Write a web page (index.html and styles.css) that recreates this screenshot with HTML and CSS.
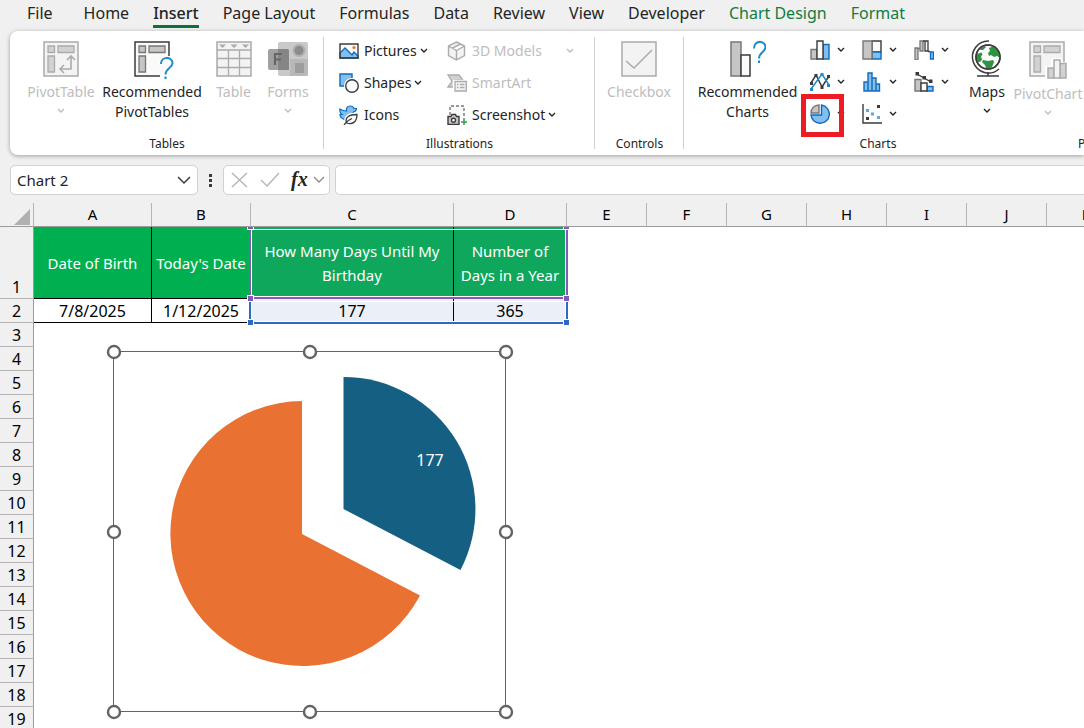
FILE: index.html
```html
<!DOCTYPE html>
<html lang="en">

<head>
  <meta charset="UTF-8">
  <meta name="viewport" content="width=device-width, initial-scale=1.0">
  <title>Birthday Countdown</title>
  <link rel="stylesheet" href="styles.css">
</head>

<body>
  <!-- Shared chevron -->
  <svg class="sprite" aria-hidden="true">
    <symbol id="chevron" viewBox="0 0 8 6"><path d="M1 1l3 3 3-3" fill="none" stroke="currentColor" stroke-width="1.4"/></symbol>
  </svg>

  <nav class="tabs">
    <button class="tab tab-file">File</button>
    <button class="tab">Home</button>
    <button class="tab active">Insert</button>
    <button class="tab">Page Layout</button>
    <button class="tab">Formulas</button>
    <button class="tab">Data</button>
    <button class="tab">Review</button>
    <button class="tab">View</button>
    <button class="tab">Developer</button>
    <button class="tab context">Chart Design</button>
    <button class="tab context">Format</button>
  </nav>

  <div class="ribbon">
    <!-- Tables -->
    <section class="group group-tables">
      <div class="group-body">
        <button class="big-btn w-pivot" disabled>
          <svg width="36" height="36" viewBox="0 0 36 36" fill="#f3f3f3" stroke="#ababab">
            <path d="M1 1h34v34H1z" stroke-width="1.5"/>
            <g fill="#d2d2d2" stroke-width="1.3"><path d="M5 5h6.500v6.500H5zM15 5h16v6.500H15zM5 15h6.500v16H5z"/></g>
            <path d="M17 28h11V16M21 24l-4 4 4 4M24 19l4-4 4 4" fill="none" stroke-width="1.6"/>
          </svg>
          <span>PivotTable</span>
          <svg class="chev" width="8" height="6"><use href="#chevron"/></svg>
        </button>
        <button class="big-btn w-rec">
          <svg class="spill" width="36" height="36" viewBox="0 0 36 36" fill="#fafafa" stroke="#3b3b3b">
            <path d="M26 35H1V1h34v14" stroke-width="1.5"/>
            <g fill="#c8c6c4" stroke="#797774" stroke-width="1.3"><path d="M5 5h6.500v6.500H5zM15 5h16v6.500H15zM5 15h6.500v16H5z"/></g>
            <path d="M26.500 24c0-9 11.500-8.500 11.500-2 0 5-7 5.500-7 11" fill="none" stroke="#fff" stroke-width="5"/>
            <path d="M27 23c0-8 11.500-7.500 11.500-1 0 5-7 5-7 11.500M31.500 35.500V38" fill="none" stroke="#1e8bcd" stroke-width="2"/>
          </svg>
          <span>Recommended<br>PivotTables</span>
        </button>
        <button class="big-btn w-table" disabled>
          <svg width="36" height="36" viewBox="0 0 36 36" fill="#f3f3f3" stroke="#ababab">
            <path d="M1 1h34v34H1z" stroke-width="1.500"/>
            <path d="M1 9h34M1 17.500h34M1 26.500h34M12.500 9v26M23.500 9v26" stroke-width="1.3"/>
            <path d="M3 3.500h7L6.500 7zM14.500 3.500h7L18 7zM26 3.500h7L29.500 7z" fill="#ababab" stroke="none"/>
          </svg>
          <span>Table</span>
        </button>
        <button class="big-btn w-forms" disabled>
          <svg width="40" height="36" viewBox="0 0 40 36">
            <rect x="10" y="1" width="30" height="34" rx="2" fill="#c9c9c9"/>
            <path d="M22 18h18v15a2 2 0 0 1-2 2H22z" fill="#b8b8b8"/>
            <path d="M27 22h9v10h-9z" fill="#9d9d9d"/>
            <circle cx="31" cy="9.500" r="6.500" fill="#b0b0b0"/><circle cx="31" cy="9.500" r="4.500" fill="#8b8b8b"/>
            <rect y="8" width="21" height="21" rx="2" fill="#a1a1a1"/>
            <path d="M10 8h9a2 2 0 0 1 2 2v19H10z" fill="#858585"/>
            <path d="M7 24V13h7M7 18.500h6" fill="none" stroke="#666" stroke-width="2.200"/>
          </svg>
          <span>Forms</span>
          <svg class="chev" width="8" height="6"><use href="#chevron"/></svg>
        </button>
      </div>
      <h2 class="group-label">Tables</h2>
    </section>

    <!-- Illustrations -->
    <section class="group group-illus">
      <div class="group-body small-cols">
        <div class="small-col col-left">
          <button class="small-btn">
            <svg width="20" height="20" viewBox="0 0 20 20">
              <path d="M1 3h18v14H1z" fill="#fafafa"/>
              <path d="M1 12l5-5 7 7 2-3 4 4v2H1z" fill="#83beec" stroke="#0f6cbd" stroke-width="1.4"/>
              <path d="M1 3h18v14H1z" fill="none" stroke="#3b3b3b" stroke-width="1.4"/>
              <circle cx="15" cy="6.500" r="1.600" fill="#ed7331"/>
            </svg>
            <span>Pictures</span><svg class="chev" width="8" height="6"><use href="#chevron"/></svg>
          </button>
          <button class="small-btn">
            <svg width="20" height="20" viewBox="0 0 20 20">
              <path d="M1 1h12v12H1z" fill="#83beec" stroke="#0f6cbd" stroke-width="1.400"/>
              <circle cx="13" cy="13" r="8" fill="#fff"/>
              <circle cx="13" cy="13" r="6.300" fill="#fafafa" stroke="#3b3b3b" stroke-width="1.400"/>
            </svg>
            <span>Shapes</span><svg class="chev" width="8" height="6"><use href="#chevron"/></svg>
          </button>
          <button class="small-btn">
            <svg width="20" height="20" viewBox="0 0 20 20">
              <path d="M1 4c2 1.500 4 2 6.500 2C7 3 8.500 1 11 1c2 0 3.500 1 4 2.500h2.500c0 2-1.500 3-3 3.500L12 11l-5 4C3 14 1 12 1 9.500h2C1 8 .5 6 1 4z" fill="#83beec" stroke="#0f6cbd" stroke-width="1.200"/>
              <path d="M7.500 18c-2-6 3-8.500 10.500-8.500 0 7-4 10.500-10.500 8.500z" fill="#fff" stroke="#fff" stroke-width="4"/>
              <path d="M7.500 18c-2-6 3-8.500 10.500-8.500 0 7-4 10.500-10.500 8.500zM5 20c2-3 4-5 8-6.500" fill="#fafafa" stroke="#3b3b3b" stroke-width="1.300"/>
            </svg>
            <span>Icons</span>
          </button>
        </div>
        <div class="small-col">
          <button class="small-btn" disabled>
            <svg width="20" height="20" viewBox="0 0 20 20" fill="#f3f3f3" stroke="#ababab" stroke-width="1.400">
              <path d="M9.500 1l8 4v9.500l-8 4.500-8-4.500V5zM1.500 5l8 4.500 8-4.500M9.500 9.500V19M5.500 7l8-4"/>
            </svg>
            <span class="wide-text">3D Models</span><svg class="chev" width="8" height="6"><use href="#chevron"/></svg>
          </button>
          <button class="small-btn" disabled>
            <svg width="20" height="20" viewBox="0 0 20 20" fill="#d2d2d2" stroke="#ababab" stroke-width="1.300">
              <path d="M1 2h11l4 5H8v7H1l4-5.500z"/>
              <path d="M6.500 7.500H21V20H6.500z" fill="#fff" stroke="#fff"/>
              <path d="M8 8.500h11.300v9.500H8z" fill="#f3f3f3"/>
              <path d="M10 11.500h1.500M13 11.500h4.500M10 14.500h1.500M13 14.500h4.500"/>
            </svg>
            <span>SmartArt</span>
          </button>
          <button class="small-btn">
            <svg width="20" height="20" viewBox="0 0 20 20">
              <path d="M3 10V1h14v13" fill="#fafafa" stroke="#797774" stroke-width="1.400" stroke-dasharray="3 2"/>
              <path d="M1 11.500h3l1-2h3.500l1 2H12v8H1z" fill="#c8c6c4" stroke="#3b3b3b" stroke-width="1.400"/>
              <circle cx="6.500" cy="15.300" r="2" fill="#fff" stroke="#3b3b3b" stroke-width="1.400"/>
              <path d="M17 14v6M14 17h6" stroke="#fff" stroke-width="4"/>
              <path d="M17 14v6M14 17h6" stroke="#2f9e4d" stroke-width="1.500"/>
            </svg>
            <span>Screenshot</span><svg class="chev" width="8" height="6"><use href="#chevron"/></svg>
          </button>
        </div>
      </div>
      <h2 class="group-label">Illustrations</h2>
    </section>

    <!-- Controls -->
    <section class="group group-controls">
      <div class="group-body">
        <button class="big-btn w-check" disabled>
          <svg width="36" height="36" viewBox="0 0 36 36" fill="#f3f3f3" stroke="#ababab" stroke-width="1.500">
            <path d="M1 1h34v34H1z"/><path d="M5 20l8 7L31 9" fill="none"/>
          </svg>
          <span>Checkbox</span>
        </button>
      </div>
      <h2 class="group-label">Controls</h2>
    </section>

    <!-- Charts -->
    <section class="group group-charts">
      <div class="group-body">
        <button class="big-btn w-reccharts">
          <svg width="36" height="36" viewBox="0 0 36 36">
            <path d="M1 1h10v34H1z" fill="#c8c6c4" stroke="#797774" stroke-width="1.500"/>
            <path d="M11 14h9v21h-9z" fill="#fafafa" stroke="#3b3b3b" stroke-width="1.500"/>
            <path d="M24 7.500c0-9 11.500-8 11.500-1.500 0 5-6.500 5-6.500 11.500M29 19.500V22" fill="none" stroke="#1e8bcd" stroke-width="2"/>
          </svg>
          <span>Recommended<br>Charts</span>
        </button>
        <div class="chart-grid">
          <button class="chart-btn" aria-label="Column chart">
            <svg width="20" height="20" viewBox="0 0 20 20" stroke-width="1.400">
              <path d="M1 9.500h6V19H1z" fill="#c8c6c4" stroke="#797774"/><path d="M13 4.500h6V19h-6z" fill="#83beec" stroke="#0f6cbd"/><path d="M7 1h6v18H7z" fill="#fafafa" stroke="#3b3b3b"/>
            </svg>
            <svg class="chev" width="8" height="6"><use href="#chevron"/></svg>
          </button>
          <button class="chart-btn" aria-label="Hierarchy chart">
            <svg width="20" height="20" viewBox="0 0 20 20" stroke-width="1.400">
              <path d="M10 1h9v11h-9z" fill="#fafafa" stroke="#3b3b3b"/><path d="M10 12h9v7h-9z" fill="#83beec" stroke="#0f6cbd"/><path d="M1 1h9v18H1z" fill="#c8c6c4" stroke="#797774"/>
            </svg>
            <svg class="chev" width="8" height="6"><use href="#chevron"/></svg>
          </button>
          <button class="chart-btn" aria-label="Waterfall chart">
            <svg width="20" height="20" viewBox="0 0 20 20" stroke-width="1.300">
              <path d="M1 8h3v12H1zM6 1h3v10H6zM4 8.500h2" fill="#c8c6c4" stroke="#797774"/><path d="M9 1h5v10h-3V1" fill="#fafafa" stroke="#3b3b3b"/><path d="M14 11.500h2" stroke="#3b3b3b"/><path d="M16.500 12h3v7h-3z" fill="#83beec" stroke="#0f6cbd"/>
            </svg>
            <svg class="chev" width="8" height="6"><use href="#chevron"/></svg>
          </button>
          <button class="chart-btn" aria-label="Line chart">
            <svg width="20" height="20" viewBox="0 0 20 20" fill="none" stroke-width="1.500">
              <path d="M1 11l5-8 6 12 7-11" stroke="#3b3b3b"/><path d="M1 17L12 2l7 11" stroke="#1e8bcd"/>
              <path d="M0 10h3v3H0zM4.500 2h3v3h-3zM10.500 14h3v3h-3zM17 3h3v3h-3z" fill="#3b3b3b"/>
              <path d="M0 16h3v3H0zM10.500 1h3v3h-3zM17 12h3v3h-3z" fill="#1e8bcd"/>
            </svg>
            <svg class="chev" width="8" height="6"><use href="#chevron"/></svg>
          </button>
          <button class="chart-btn" aria-label="Statistic chart">
            <svg width="20" height="20" viewBox="0 0 20 20" fill="#83beec" stroke="#0f6cbd" stroke-width="1.400">
              <path d="M2 10h4v9H2zM6 1h4v18H6zM10 6h4v13h-4zM14 12h3.500v7H14z"/>
            </svg>
            <svg class="chev" width="8" height="6"><use href="#chevron"/></svg>
          </button>
          <button class="chart-btn" aria-label="Combo chart">
            <svg width="20" height="20" viewBox="0 0 20 20" stroke-width="1.400">
              <path d="M1 7.500h6V19H1z" fill="#c8c6c4" stroke="#797774"/><path d="M13 14.500h6V19h-6z" fill="#83beec" stroke="#0f6cbd"/><path d="M7 11h6v8H7z" fill="#fafafa" stroke="#3b3b3b"/>
              <path d="M3 2l7 4 7 4" fill="none" stroke="#3b3b3b"/><path d="M1.500 0h3.500v3.500H1.500zM8.500 4H12v3.500H8.500zM15 7.500h3.500V11H15z" fill="#3b3b3b"/>
            </svg>
            <svg class="chev" width="8" height="6"><use href="#chevron"/></svg>
          </button>
          <button class="chart-btn highlighted" aria-label="Pie chart">
            <svg width="20" height="20" viewBox="0 0 20 20" stroke-width="1.400">
              <path d="M9 9H1c0-4.500 3.500-8 8-8z" fill="#c8c6c4" stroke="#797774"/>
              <path d="M11.500 1A9.200 9.200 0 1 1 1 11h10.500z" fill="#83beec" stroke="#0f6cbd"/>
            </svg>
            <svg class="chev" width="8" height="6"><use href="#chevron"/></svg>
          </button>
          <button class="chart-btn" aria-label="Scatter chart">
            <svg width="20" height="20" viewBox="0 0 20 20">
              <path d="M1 0v19h19" fill="none" stroke="#3b3b3b" stroke-width="1.400"/>
              <path d="M15 1h3v3h-3zM4 13h3v3H4z" fill="#3b3b3b"/><path d="M4 5h3v3H4zM9 8.500h3v3H9zM15 12h3v3h-3z" fill="#5aa8e2"/>
            </svg>
            <svg class="chev" width="8" height="6"><use href="#chevron"/></svg>
          </button>
        </div>
        <button class="big-btn w-maps">
          <svg class="spill" width="32" height="36" viewBox="0 0 32 36" fill="none" stroke="#3b3b3b" stroke-width="1.500">
            <circle cx="17" cy="16" r="12" fill="#fafafa"/>
            <g fill="#2f9441" stroke="none">
              <path d="M18 7l5-2 3 3 3 5v4l-3-2-3 1-3-2-2 1-1-3 2-2z"/>
              <path d="M5.500 13l5-1.500 1 2-1.500 2 1 3-2 2.500H7c-1-2-2-5-1.500-8z"/>
              <path d="M10 7l4-2 1 1-3 3-3 0z"/>
              <path d="M12 19l5 1 5-1 1 2-2 5-3 2-3-1-1-3-3-3z"/>
            </g>
            <circle cx="17" cy="16" r="12"/>
            <path d="M18 0a16 16 0 1 0 10 28M17 31v4M6 35h22"/>
          </svg>
          <span>Maps</span>
          <svg class="chev" width="8" height="6"><use href="#chevron"/></svg>
        </button>
      </div>
      <h2 class="group-label">Charts</h2>
    </section>

    <section class="group group-last">
      <div class="group-body">
        <button class="big-btn w-pivotchart" disabled>
          <svg width="38" height="38" viewBox="0 0 38 38" fill="#f3f3f3" stroke="#ababab">
            <path d="M1 1h34v34H1z" stroke-width="1.500"/>
            <g fill="#d2d2d2" stroke-width="1.300"><path d="M5 5h6.500v6.500H5zM15 5h16v6.500H15zM5 15h6.500v16H5z"/></g>
            <path d="M17 26h6v-8h9v4h6v16H17z" fill="#fff" stroke="#fff" stroke-width="2"/>
            <path d="M19 27h6v10h-6zM31 22.500h6V37h-6z" fill="#d2d2d2" stroke-width="1.500"/><path d="M25 19h6v18h-6z" stroke-width="1.500"/>
          </svg>
          <span>PivotChart</span>
          <svg class="chev" width="8" height="6"><use href="#chevron"/></svg>
        </button>
      </div>
      <h2 class="group-label">PivotChart</h2>
    </section>
  </div>

  <!-- Name box and formula bar -->
  <div class="formula-row">
    <div class="name-box">
      <input type="text" value="Chart 2" aria-label="Name box">
      <button aria-label="Open name list"><svg width="14" height="9" viewBox="0 0 14 9"><path d="M1 1l6 6 6-6" fill="none" stroke="#3b3b3b" stroke-width="1.500"/></svg></button>
    </div>
    <svg class="dots" width="4" height="16" viewBox="0 0 4 16" fill="#3b3b3b"><path d="M0 2h3v3H0zM0 7h3v3H0zM0 12h3v3H0z"/></svg>
    <div class="fx-box">
      <button aria-label="Cancel"><svg width="18" height="16" viewBox="0 0 18 16"><path d="M1 1l15 14M16 1L1 15" stroke="#b5b5b5" stroke-width="1.400"/></svg></button>
      <button aria-label="Enter"><svg width="20" height="16" viewBox="0 0 20 16"><path d="M1 8l6 6L19 1" fill="none" stroke="#b5b5b5" stroke-width="1.400"/></svg></button>
      <button class="fx" aria-label="Insert function">fx</button>
      <button aria-label="Recent functions"><svg width="12" height="8" viewBox="0 0 12 8"><path d="M1 1l5 5 5-5" fill="none" stroke="#8a8a8a" stroke-width="1.300"/></svg></button>
    </div>
    <input class="formula-input" type="text" aria-label="Formula bar">
  </div>

  <main class="sheet">
    <table class="grid">
      <colgroup>
        <col class="c-head"><col class="c-a"><col class="c-b"><col class="c-c"><col class="c-d">
        <col class="c-std"><col class="c-std"><col class="c-std"><col class="c-std"><col class="c-std"><col class="c-std"><col class="c-std">
      </colgroup>
      <thead>
        <tr>
          <th class="corner"><svg width="16" height="16" viewBox="0 0 16 16"><path d="M16 0v16H0z" fill="#b1b1b1"/></svg></th>
          <th>A</th><th>B</th><th>C</th><th>D</th><th>E</th><th>F</th><th>G</th><th>H</th><th>I</th><th>J</th><th>K</th>
        </tr>
      </thead>
      <tbody>
        <tr class="title-row">
          <th>1</th>
          <td class="title">Date of Birth</td>
          <td class="title">Today's Date</td>
          <td class="title picked">How Many Days Until My Birthday</td>
          <td class="title picked">Number of Days in a Year</td>
        </tr>
        <tr>
          <th>2</th>
          <td class="value">7/8/2025</td>
          <td class="value">1/12/2025</td>
          <td class="value picked">177</td>
          <td class="value picked">365</td>
        </tr>
        <tr><th>3</th></tr>
        <tr><th>4</th></tr>
        <tr><th>5</th></tr>
        <tr><th>6</th></tr>
        <tr><th>7</th></tr>
        <tr><th>8</th></tr>
        <tr><th>9</th></tr>
        <tr><th>10</th></tr>
        <tr><th>11</th></tr>
        <tr><th>12</th></tr>
        <tr><th>13</th></tr>
        <tr><th>14</th></tr>
        <tr><th>15</th></tr>
        <tr><th>16</th></tr>
        <tr><th>17</th></tr>
        <tr><th>18</th></tr>
        <tr><th>19</th></tr>
      </tbody>
    </table>

    <!-- Source ranges of the chart -->
    <div class="range range-names"><i class="knob tl"></i><i class="knob tr"></i></div>
    <div class="range range-values"><i class="knob bl"></i><i class="knob br"></i></div>
    <div class="range range-joint"><i class="knob tl"></i><i class="knob tr"></i></div>

    <!-- Pie chart -->
    <svg class="pie" width="408" height="376" viewBox="106 344 408 376">
      <path d="M113.500 351.500h392v360h-392z" fill="#fff" stroke="#636363"/>
      <path d="M302 534L420 595.500A132.500 132.500 0 1 1 302 401z" fill="#e97132"/>
      <path d="M343.500 509V377A132 132 0 0 1 460.500 570z" fill="#156082"/>
      <text x="430" y="466" text-anchor="middle">177</text>
      <g fill="#fff" stroke="#636363" stroke-width="2.400">
        <circle cx="114" cy="352" r="6"/><circle cx="310" cy="352" r="6"/><circle cx="506" cy="352" r="6"/>
        <circle cx="114" cy="532" r="6"/><circle cx="506" cy="532" r="6"/>
        <circle cx="114" cy="712" r="6"/><circle cx="310" cy="712" r="6"/><circle cx="506" cy="712" r="6"/>
      </g>
    </svg>
  </main>
</body>

</html>
```
FILE: styles.css
```css
*,
*::after {
  box-sizing: border-box;
}

body {
  margin: 0;
  height: 100vh;
  display: flex;
  flex-direction: column;
  overflow: hidden;
  background-color: #f0f0f0;
  color: #242424;
  font-family: "Noto Sans", "Open Sans", sans-serif;
  font-size: 14px;
}

button,
input {
  font: inherit;
  color: inherit;
  background: none;
  border: none;
  padding: 0;
  margin: 0;
}

button:disabled {
  color: #bdbdbd;
}

svg {
  display: block;
  flex-shrink: 0;
}

.spill {
  overflow: visible;
}

.sprite {
  position: absolute;
  width: 0;
  height: 0;
}

/* Tabs */
.tabs {
  display: flex;
  gap: 24px;
  height: 31px;
  padding-left: 27px;
  flex-shrink: 0;
}

.tab {
  font-size: 16px;
  line-height: 24px;
  height: 28px;
  padding-top: 1px;
  border-bottom: 3px solid transparent;
  white-space: nowrap;
}

.tab-file {
  margin-right: 7px;
}

.tab.active {
  font-weight: 500;
  border-bottom-color: #0f703b;
}

.tab.context {
  color: #107c41;
}

/* Ribbon */
.ribbon {
  display: flex;
  height: 124px;
  margin-left: 10px;
  flex-shrink: 0;
  background-color: #fff;
  border-radius: 8px 0 0 8px;
  box-shadow: 0 1px 4px rgba(0, 0, 0, 0.35);
}

.group {
  flex-shrink: 0;
  display: flex;
  flex-direction: column;
  justify-content: space-between;
  height: 115px;
  margin-top: 6px;
}

.group-tables,
.group-illus,
.group-controls {
  background: linear-gradient(#d1d1d1, #d1d1d1) right top / 1px 112px no-repeat;
}

.group-tables { width: 314px; }
.group-illus { width: 271px; }
.group-controls { width: 89px; }
.group-charts { width: 328px; }
.group-last { width: 72px; }

.group-body {
  display: flex;
}

.group-tables .group-body { padding-left: 14px; }
.group-charts .group-body { padding-left: 9px; }

.group-label {
  margin: 0;
  font-size: 12px;
  font-weight: normal;
  line-height: 16px;
  text-align: center;
}

.group-charts .group-label { padding-left: 60px; }
.group-last .group-label { padding-left: 66px; text-align: left; }

.big-btn {
  display: flex;
  flex-direction: column;
  align-items: center;
  padding-top: 4px;
  line-height: 20px;
  white-space: nowrap;
}

.big-btn > svg:first-child {
  margin-bottom: 5px;
}

.big-btn svg.chev {
  margin-top: 6px;
}

.big-btn span {
  height: 20px;
}

.w-pivot { width: 74px; }
.w-rec { width: 108px; }
.w-table { width: 55px; }
.w-forms { width: 54px; }
.w-check { width: 88px; }
.w-reccharts { width: 109px; }
.w-maps { width: 42px; }
.w-pivotchart { width: 72px; }

.small-cols {
  padding-left: 15px;
}

.col-left {
  width: 108px;
}

.small-btn {
  display: flex;
  align-items: center;
  gap: 5px;
  height: 32px;
  line-height: 20px;
  padding-bottom: 5px;
}

.small-btn .chev {
  margin-left: -2px;
}

.wide-text {
  width: 91px;
  text-align: left;
}

.chart-grid {
  display: grid;
  grid-template-columns: repeat(3, 52px);
  grid-auto-rows: 32px;
  padding-left: 8px;
}

.chart-btn {
  position: relative;
  display: flex;
  align-items: center;
  gap: 7px;
  padding-bottom: 6px;
}

.highlighted::after {
  content: "";
  position: absolute;
  left: -9px;
  top: -7px;
  width: 43px;
  height: 43px;
  border: 5px solid #ed1c24;
}

/* Formula bar */
.formula-row {
  display: flex;
  align-items: center;
  height: 48px;
  padding: 2px 0 0 10px;
  flex-shrink: 0;
}

.name-box,
.fx-box,
.formula-input {
  height: 30px;
  background-color: #fff;
  border: 1px solid #d1d1d1;
  border-radius: 5px;
}

.name-box {
  display: flex;
  align-items: center;
  width: 188px;
  padding: 0 6px;
}

.name-box input {
  flex: 1;
  min-width: 0;
  font-size: 15px;
}

.dots {
  margin: 0 10px 0 11px;
}

.fx-box {
  display: flex;
  align-items: center;
  gap: 11px;
  width: 107px;
  padding: 0 2px 0 7px;
}

.fx-box .fx {
  font: italic bold 20px/20px "Liberation Serif", serif;
  padding-bottom: 2px;
}

.fx-box button:last-child {
  margin-left: -6px;
}

.formula-input {
  flex: 1;
  margin-left: 5px;
  border-right: none;
  border-radius: 5px 0 0 5px;
}

/* Sheet */
.sheet {
  position: relative;
  flex: 1;
  background-color: #fff;
  overflow: hidden;
}

.grid {
  table-layout: fixed;
  width: 1127px;
  border-collapse: separate;
  border-spacing: 0;
  color: #000;
}

.c-head { width: 34px; }
.c-a { width: 118px; }
.c-b { width: 99px; }
.c-c { width: 203px; }
.c-d { width: 113px; }
.c-std { width: 80px; }

.grid th,
.grid td {
  height: 24px;
  padding: 0;
  font-weight: normal;
  font-size: 15px;
  line-height: 22px;
}

.grid th {
  background-color: #f0f0f0;
  line-height: 20px;
  padding-bottom: 2px;
}

.grid thead th {
  border-bottom: 1px solid #9b9b9b;
  border-right: 1px solid #b5b5b5;
}

.grid .corner {
  padding-bottom: 0;
}

.corner svg {
  margin: 4px 0 0 14px;
}

.grid tbody th {
  font-size: 16px;
  border-right: 1px solid #9b9b9b;
  border-bottom: 1px solid #b5b5b5;
  padding-bottom: 1px;
  vertical-align: bottom;
}

.grid .title-row th,
.grid .title {
  height: 72px;
}

.grid .title {
  background-color: #00b050;
  color: #fff;
  line-height: 24px;
  text-align: center;
  border-right: 1px solid #000;
  border-bottom: 1px solid #000;
}

.grid .title.picked {
  background-color: #0fa75b;
}

.grid .value {
  font-size: 16px;
  text-align: center;
  border-right: 1px solid #000;
  border-bottom: 1px solid #000;
}

.grid .value.picked {
  background-color: #eaeff8;
}

.range {
  position: absolute;
  left: 249px;
  width: 319px;
  border: 2px solid #8659b7;
  outline: 1px solid #fff;
  outline-offset: -3px;
}

.range-names {
  top: 24px;
  height: 72px;
  border-top: none;
  clip-path: inset(0 -6px);
}

.range-values {
  top: 96px;
  height: 25px;
  border-color: #2d69c4;
  border-top: none;
}

.range-joint {
  top: 94px;
  height: 0;
  border-width: 2px 0 0;
  outline: none;
}

.knob {
  position: absolute;
  width: 7px;
  height: 7px;
  background-color: #8659b7;
  border: 1px solid #fff;
}

.range-names .knob { top: -4px; }
.range-joint .knob { top: -4px; }
.range-values .knob { bottom: -4px; background-color: #2d69c4; }
.tl, .bl { left: -4px; }
.tr, .br { right: -4px; }
.range-joint .tl { left: -2px; }
.range-joint .tr { right: -2px; }

.pie {
  position: absolute;
  left: 106px;
  top: 141px;
}

.pie text {
  font-size: 16px;
  fill: #fff;
}
```
